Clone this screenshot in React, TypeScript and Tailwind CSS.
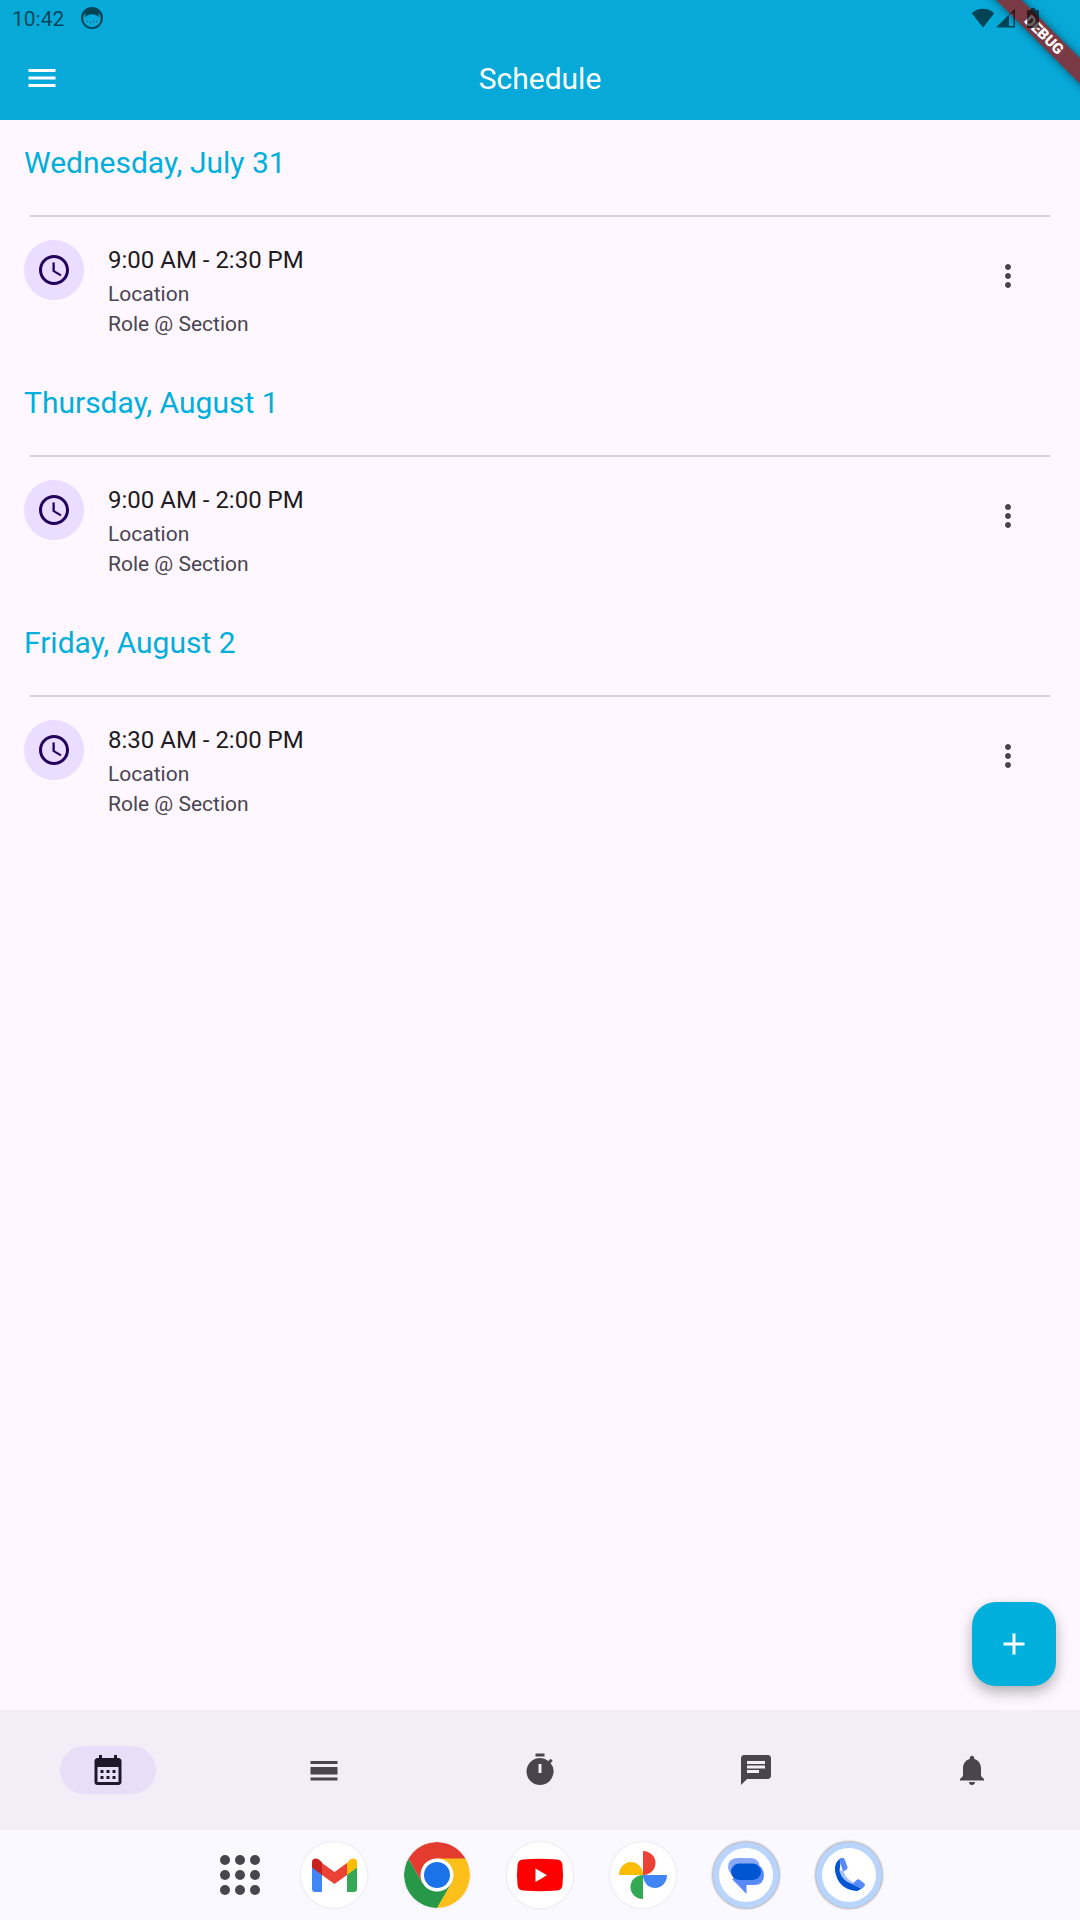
import { ReactNode } from "react";
import {
  MdAccessTime,
  MdAdd,
  MdCalendarMonth,
  MdChat,
  MdMenu,
  MdMoreVert,
  MdNotifications,
  MdTimer,
} from "react-icons/md";

const shifts = [
  { day: "Wednesday, July 31", time: "9:00 AM - 2:30 PM" },
  { day: "Thursday, August 1", time: "9:00 AM - 2:00 PM" },
  { day: "Friday, August 2", time: "8:30 AM - 2:00 PM" },
];

function ViewDayIcon() {
  return (
    <svg viewBox="0 0 24 24" className="size-9" fill="currentColor">
      <path d="M3 17h18v2H3zM3 10h18v5H3zM3 6h18v2H3z" />
    </svg>
  );
}

const tabs = [
  { label: "Schedule", icon: <MdCalendarMonth className="size-9" /> },
  { label: "Shifts", icon: <ViewDayIcon /> },
  { label: "Timer", icon: <MdTimer className="size-9" /> },
  { label: "Messages", icon: <MdChat className="size-9" /> },
  { label: "Notifications", icon: <MdNotifications className="size-9" /> },
];

function StatusBar() {
  return (
    <div className="relative z-20 flex h-9 items-center justify-between pl-3 pr-[41px] text-black/60">
      <div className="flex items-center gap-[17px]">
        <span className="pt-px text-[21px] leading-9">10:42</span>
        <svg viewBox="0 0 22 22" className="size-[22px]">
          <path
            d="M11 0a11 11 0 1 0 0 22 11 11 0 0 0 0-22zM4.500 5.500 6 8.500h1L8 7.500h6l1 1h1l1.500-3a8.800 8.800 0 1 1-13 0z"
            fill="currentColor"
            fillRule="evenodd"
          />
          <path
            d="M4 10.500 4.500 5l1.500 3.500zM18 10.500 17.500 5 16 8.500zM6 14h1v1H6zM9 15h1v1H9zM12 14h1v1h-1zM15 14h1v1h-1z"
            fill="currentColor"
          />
        </svg>
      </div>
      <div className="flex h-5 items-center">
        <svg viewBox="0 0 24 20" className="h-5 w-6" fill="currentColor">
          <path d="M12 19.500.8 5.200C4 2.300 7.800.8 12 .8s8 1.500 11.200 4.400z" />
        </svg>
        <svg viewBox="0 0 22 20" className="h-5 w-[22px]" fill="currentColor" fillRule="evenodd">
          <path d="M20 .5V19.500H1zM14 7v11h4.500V5.500H16z" />
        </svg>
        <svg viewBox="0 0 12 20" className="ml-[10px] h-5 w-3" fill="currentColor">
          <path d="M4 0h4v2h3q1 0 1 1v16q0 1-1 1H1q-1 0-1-1V3q0-1 1-1h3z" />
        </svg>
      </div>
    </div>
  );
}

function Shift({ day, time }: { day: string; time: string }) {
  return (
    <section className="pb-[21px] pt-[25px]">
      <h2 className="px-6 text-[30px] leading-9 text-[#00afdb]">{day}</h2>
      <hr className="mx-[30px] mt-[34px] border-t-2 border-[#d6d0d9]" />
      <div className="flex items-start gap-6 pl-6 pr-9 pt-[23px]">
        <div className="grid size-[60px] place-items-center rounded-full bg-[#eaddff] text-[#21005d]">
          <MdAccessTime className="size-9" />
        </div>
        <div className="flex-1 pt-[2px] text-[21px] leading-[30px] text-[#49454f]">
          <h3 className="mb-px text-2xl leading-9 text-[#1d1b20]">{time}</h3>
          <p>Location</p>
          <p>Role @ Section</p>
        </div>
        <button aria-label="More" className="grid size-[72px] place-items-center text-[#49454f]">
          <MdMoreVert className="size-9" />
        </button>
      </div>
    </section>
  );
}

function DockIcon({ label, children }: { label: string; children: ReactNode }) {
  return (
    <button
      aria-label={label}
      className="size-[66px] overflow-hidden rounded-full bg-white shadow-[0_0_3px_rgba(0,0,0,0.12)]"
    >
      <svg viewBox="0 0 66 66" className="size-full">
        {children}
      </svg>
    </button>
  );
}

// Blue ringed variant used by the messages and phone apps
function RingedIcon({ label, children }: { label: string; children: ReactNode }) {
  return (
    <button
      aria-label={label}
      className="size-[66px] overflow-hidden rounded-full bg-[#b9d4fd] shadow-[0_0_2px_1px_rgba(0,0,0,0.3)]"
    >
      <svg viewBox="0 0 66 66" className="size-full">
        <circle cx="33" cy="33" r="27" fill="#fff" />
        {children}
      </svg>
    </button>
  );
}

function Dock() {
  return (
    <footer className="flex h-[90px] items-center justify-center gap-[37px] bg-[#faf9ff]">
      <button aria-label="All apps" className="flex h-[66px] w-[66px] items-center justify-end pr-1">
        <svg viewBox="0 0 40 40" className="size-10" fill="#47464f">
          {[5, 20, 35].map((y) =>
            [5, 20, 35].map((x) => <circle key={`${x}-${y}`} cx={x} cy={y} r="5" />)
          )}
        </svg>
      </button>
      <DockIcon label="Gmail">
        <path d="M11 25v22q0 3 3 3h7V31z" fill="#4285f4" />
        <path d="M56 25v22q0 3-3 3h-7V31z" fill="#34a853" />
        <path d="M46 21v12l10-7.500V20q0-3.500-4-3.500-2 0-3.500 1.500z" fill="#fbbc04" />
        <path d="M21 21v12l12.500 9L46 33V21l-12.500 9z" fill="#ea4335" />
        <path d="M11 25.500V20q0-3.500 4-3.500 2 0 3.500 1.500L21 20.500V33z" fill="#c5221f" />
      </DockIcon>
      <DockIcon label="Chrome">
        <path d="M33 33 4.400 16.500A33 33 0 0 1 61.600 16.500z" fill="#e33b2e" />
        <path d="M33 16.500H61.600A33 33 0 0 1 33 66L47.300 41.250z" fill="#fdc01a" />
        <path d="M4.400 16.500 18.700 41.250 33 49.500 47.300 41.250 33 66A33 33 0 0 1 4.400 16.500z" fill="#279847" />
        <path d="M4.400 16.500 18.700 41.250 25 20z" fill="#e33b2e" />
        <circle cx="33" cy="33" r="16.500" fill="#fff" />
        <circle cx="33" cy="33" r="13" fill="#1a73e8" />
      </DockIcon>
      <DockIcon label="YouTube">
        <path
          d="M16 17.600Q33 16 50 17.600 55 18 55.500 23 56.500 33 55.500 43 55 48 50 48.600 33 50 16 48.600 11 48 10.500 43 9.500 33 10.500 23 11 18 16 17.600z"
          fill="#f00"
        />
        <path d="M28.500 26.500v13.500L40 33.200z" fill="#fff" />
      </DockIcon>
      <DockIcon label="Photos">
        <path d="M33 9a12.500 12 0 0 1 0 24z" fill="#ea4335" />
        <path d="M57 33a12 13 0 0 1-24 0z" fill="#4285f4" />
        <path d="M33 57a12.500 12 0 0 1 0-24z" fill="#34a853" />
        <path d="M9 33a12 13 0 0 1 24 0z" fill="#fbbc04" />
      </DockIcon>
      <RingedIcon label="Messages">
        <path d="M43 22q8 3 8 11 0 10-10 10h-7.500v9L19 37z" fill="#588afc" />
        <path d="M25.500 16H37q9 0 10 9v8H20q-5-3-5-8 0-9 10.500-9z" fill="#8ba9fb" />
        <rect x="18" y="21.500" width="30" height="16.500" rx="8.250" fill="#0056d2" />
      </RingedIcon>
      <RingedIcon label="Phone">
        <path d="m23 28 4.500 1q2 8 9.500 11v4Q26 41 23 28z" fill="#a5bffb" />
        <path
          d="M25 16q-7 4-6 13 3 18 21 20 4 0 6-4l-10-3Q26 39 23.500 29z"
          fill="#0056d2"
        />
        <path
          d="M24.500 16.500q2.500-1.500 4 .5l3 8q.5 2-1.500 3l-3 1.500-4-12.500zM36 42.500l4.500-4.500q1.500-1.500 3.500 0l5 4q.5 2-3.500 5z"
          fill="#588afc"
        />
      </RingedIcon>
    </footer>
  );
}

export default function App() {
  return (
    <div className="relative flex min-h-screen flex-col overflow-hidden bg-[#fef7ff] font-[Roboto,sans-serif]">
      <header className="bg-[#07a9d8]">
        <StatusBar />
        <div className="grid h-[84px] grid-cols-[84px_1fr_84px] items-center text-white">
          <button aria-label="Menu" className="grid size-[84px] place-items-center">
            <MdMenu className="size-9" />
          </button>
          <h1 className="pt-[2px] text-center text-[30px] leading-9">Schedule</h1>
        </div>
      </header>
      <div className="absolute -right-16 top-[26px] z-10 h-[18px] w-[200px] rotate-45 bg-[#7a3a45] text-center text-[15px] font-black leading-[18px] text-white shadow-[0_0_9px_rgba(0,0,0,0.5)]">
        DEBUG
      </div>

      <main className="relative flex-1">
        {shifts.map((shift) => (
          <Shift key={shift.day} {...shift} />
        ))}
        <button
          aria-label="Add shift"
          className="absolute bottom-6 right-6 grid size-[84px] place-items-center rounded-3xl bg-[#00afdb] text-white shadow-[0_6px_14px_rgba(0,0,0,0.3)]"
        >
          <MdAdd className="size-9" />
        </button>
      </main>

      <nav className="grid h-[120px] grid-cols-5 items-center bg-[#f3edf7]">
        {tabs.map((tab, index) => (
          <button
            key={tab.label}
            aria-label={tab.label}
            className={`mx-auto grid h-12 w-24 place-items-center rounded-full ${
              index === 0 ? "bg-[#e8def8] text-[#1d192b]" : "text-[#49454f]"
            }`}
          >
            {tab.icon}
          </button>
        ))}
      </nav>
      <Dock />
    </div>
  );
}
